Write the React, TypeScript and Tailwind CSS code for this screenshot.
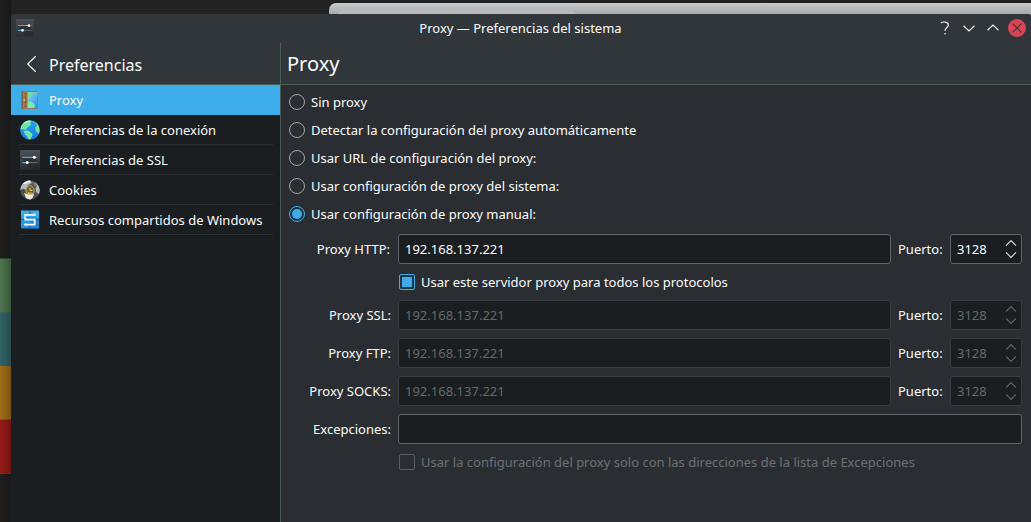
import React from "react";

function SettingsIcon({ className }: { className: string }) {
  return (
    <svg viewBox="0 0 20 20" className={className}>
      <defs>
        <linearGradient id="sg" x1="0" y1="0" x2="0" y2="1">
          <stop offset="0" stopColor="#4c4f55" />
          <stop offset="1" stopColor="#2c2e33" />
        </linearGradient>
      </defs>
      <rect x="0" y="0" width="20" height="19.5" fill="url(#sg)" />
      <path d="M2 8.5 L14 7.5 L19.5 13 V19 H11 L5 13Z" fill="#222429" opacity="0.55" />
      <path d="M14 7.3H18" stroke="#73767b" strokeWidth="1" />
      <path d="M8 12.6H18" stroke="#686b70" strokeWidth="1" />
      <path d="M2.4 7.3H14M2.4 12.6H7" stroke="#3daee9" strokeWidth="1.2" />
      <circle cx="14.3" cy="7.3" r="1.5" fill="#fff" />
      <circle cx="7.2" cy="12.6" r="1.5" fill="#fff" />
    </svg>
  );
}

function ProxyIcon() {
  return (
    <svg viewBox="0 0 20 20" className="h-5 w-5">
      <defs>
        <linearGradient id="pg" x1="0" y1="0" x2="1" y2="1">
          <stop offset="0" stopColor="#8fd3fa" />
          <stop offset="1" stopColor="#2f94ea" />
        </linearGradient>
      </defs>
      <rect x="3" y="1" width="15" height="18" fill="#8c7b6b" />
      <rect x="7" y="2" width="10.3" height="16" fill="url(#pg)" />
      <path d="M7 2H13Q13 5 10.5 6.5L8.6 10.4L7 10Z" fill="#75dfa3" />
      <path d="M7 12L11 11.5L13 13L15.2 16L13.5 18H7Z" fill="#7cebab" />
      <path d="M13 2H17.3V6Z" fill="#8abd9b" />
      <path d="M1.6 0.8L7.6 1.8V17.9L1.6 19.3Z" fill="#aa7950" />
      <path d="M1.6 0.8L3 1V19L1.6 19.3Z" fill="#856042" />
      <path d="M5.6 3.2V17M4 3.2H6.8M4 7.2H6.8M4 12.5H6.8M4 16.5H6.8" stroke="#79573e" strokeWidth="0.7" />
      <circle cx="4.2" cy="10" r="0.8" fill="#ead3a2" />
    </svg>
  );
}

function GlobeIcon() {
  return (
    <svg viewBox="0 0 20 20" className="h-5 w-5">
      <defs>
        <linearGradient id="gg" x1="0" y1="0" x2="0" y2="1">
          <stop offset="0" stopColor="#23a6f4" />
          <stop offset="1" stopColor="#1b78e5" />
        </linearGradient>
        <clipPath id="gc"><circle cx="10" cy="10" r="9.8" /></clipPath>
      </defs>
      <circle cx="10" cy="10" r="9.8" fill="url(#gg)" />
      <g clipPath="url(#gc)" fill="#76e4a1">
        <path d="M1 6L5 1L10 0L11.5 1.7L10 4L11.2 5L8.8 6.4L6.8 8L5.8 10.2L3.8 9.2L2.3 9.7L0 9Z" />
        <path d="M3.5 11.2L7.3 10.2L9.6 11.5L12 13.5L12.7 15L10.7 18.7L9 20L7.3 17L5 14.2Z" />
        <path d="M14.5 2L18 4.5L19.7 8.5V14L17.5 12.8L15.8 10.7L15.2 8L17 5.5Z" />
        <path d="M2.6 3.5L8.5 0L10.8 1.2L6.8 3.3Z" fill="#a4efc2" />
      </g>
    </svg>
  );
}

function CookieIcon() {
  return (
    <svg viewBox="0 0 20 20" className="h-5 w-5">
      <clipPath id="cc"><circle cx="10" cy="10" r="9.8" /></clipPath>
      <circle cx="10" cy="10" r="9.8" fill="#4d4f51" />
      <g clipPath="url(#cc)">
        <path d="M0 8L4 1L10 0L12 3L8 5L5.6 10L3.8 8.7L0 10Z" fill="#b7b9bb" />
        <path d="M2 4L9 0L11 2L5 4Z" fill="#f3f3f3" />
        <path d="M4 13L7 14L10 12L14 14L12.5 18L10 20L6 18Z" fill="#e9e9e9" />
        <path d="M15 2L18 5L20 9V15L16 12L15.5 8L17 6Z" fill="#b8babb" />
        <path d="M12 2L16 3L17 7L14 6Z" fill="#7c7e7f" />
      </g>
      <path d="M9.5 5.3C7.8 6 6 8 6 10.4A4.1 4.1 0 0 0 14.2 10.4C14.2 8 12.5 6.5 10.2 5.2Z" fill="#777260" fillOpacity="0.6" stroke="#d5b631" strokeWidth="0.9" />
      <path d="M10 8V10.5H12.3M7.8 12L9 12.8" fill="none" stroke="#f0cc35" strokeWidth="1" />
    </svg>
  );
}

function SambaIcon() {
  return (
    <svg viewBox="0 0 20 20" className="h-5 w-5">
      <defs>
        <linearGradient id="wg" x1="0" y1="0" x2="0" y2="1">
          <stop offset="0" stopColor="#3eb2ee" />
          <stop offset="1" stopColor="#1e8be2" />
        </linearGradient>
      </defs>
      <rect x="1" y="0.5" width="18" height="18" fill="url(#wg)" />
      <path d="M10 0.5V5M10 15V18.5M1 9.7H5M15 9.7H19" stroke="#1c4f78" strokeWidth="0.9" />
      <path d="M5.5 7L15.5 17H19V10L15.5 6.5Z" fill="#1b71ad" opacity="0.4" />
      <path d="M14.5 4.8H5.2V9.7H14.7V14.6H5" fill="none" stroke="#f4f8fb" strokeWidth="1.7" />
      <path d="M14 3L16.4 4.8L14 6.6ZM6 12.8L3.6 14.6L6 16.4Z" fill="#f4f8fb" />
    </svg>
  );
}

const items = [
  { label: "Proxy", icon: <ProxyIcon /> },
  { label: "Preferencias de la conexión", icon: <GlobeIcon /> },
  { label: "Preferencias de SSL", icon: <SettingsIcon className="h-5 w-5" /> },
  { label: "Cookies", icon: <CookieIcon /> },
  { label: "Recursos compartidos de Windows", icon: <SambaIcon /> },
];

const modes = [
  "Sin proxy",
  "Detectar la configuración del proxy automáticamente",
  "Usar URL de configuración del proxy:",
  "Usar configuración de proxy del sistema:",
  "Usar configuración de proxy manual:",
];

function Radio({ label, checked }: { label: string; checked: boolean }) {
  return (
    <div className="flex h-5 items-center gap-1.5">
      <svg viewBox="0 0 16 16" className="h-4 w-4">
        <circle cx="8" cy="8" r="7.5" fill={checked ? "#1f3442" : "none"} stroke={checked ? "#3daee9" : "#a0a3a5"} />
        {checked && <circle cx="8" cy="8" r="5" fill="#3daee9" />}
      </svg>
      <span>{label}</span>
    </div>
  );
}

function ProxyRow({ label, enabled }: { label: string; enabled: boolean }) {
  const box = enabled ? "border-[#616569] text-[#fcfcfc]" : "border-[#383c40] text-[#65686a]";
  return (
    <div className="flex h-[30px] items-center">
      <div className={`w-[111px] text-right ${enabled ? "pr-2" : "pr-[7px]"}`}>{label}</div>
      <div className={`flex h-[30px] w-[493px] items-center rounded-[3px] border bg-[#1b1e20] pl-1.5 ${box}`}>192.168.137.221</div>
      <div className="w-[59px] pl-[7px]">Puerto:</div>
      <div className={`flex h-[30px] w-[72px] items-center justify-between rounded-[3px] border bg-[#1b1e20] pr-1 pl-1.5 ${box}`}>
        <span>3128</span>
        <svg viewBox="0 0 12 20" className="h-5 w-3" fill="none" stroke={enabled ? "#dcdddd" : "#626567"} strokeWidth="1.1">
          <path d="M1 6.6L6 1.6L11 6.6M1 13.4L6 18.4L11 13.4" />
        </svg>
      </div>
    </div>
  );
}

export default function App() {
  return (
    <div className="relative flex h-[522px] w-[1031px] overflow-hidden bg-[#222222] font-['Noto_Sans',sans-serif] text-[13px] leading-5 whitespace-nowrap text-[#fcfcfc]">
      <div className="absolute top-[3px] left-[329px] h-8 w-[702px] overflow-hidden rounded-tl-[7px] bg-linear-to-b from-[#c8cacc] from-0% to-[#a2a4a7] to-40%">
        <div className="mt-[7px] ml-2 h-6 w-[240px] rounded-t-[8px] bg-[#bababa]" />
      </div>

      <div className="relative w-[11px] shrink-0 bg-[#202020] pt-[258px]">
        <div className="h-[54px] border-t border-[#354d36] bg-[#4d754e]" />
        <div className="h-[54px] border-t border-[#3c685c] bg-[#326468]" />
        <div className="h-[53px] bg-[#a07018]" />
        <div className="h-[55px] border-t border-b border-t-[#90551a] border-b-[#614028] bg-[#981b16]" />
        <div className="absolute inset-0 bg-linear-to-r from-transparent to-black/25" />
      </div>

      <div className="relative mt-3.5 flex h-[508px] w-[1020px] flex-col overflow-hidden rounded-t-[3px] bg-[#2a2e32]">
        <header className="flex h-[29px] shrink-0 items-center bg-[#31363b] pb-px">
          <div className="w-[300px] pl-[5px]">
            <SettingsIcon className="h-[18px] w-[18px]" />
          </div>
          <div className="w-[419px] text-center">Proxy — Preferencias del sistema</div>
          <div className="flex flex-1 items-center justify-end pr-1">
            <svg viewBox="0 0 92 20" className="h-5 w-[92px]" fill="none" stroke="#eeeeee" strokeWidth="1.2">
              <path d="M5.8 5C7.4 3.6 13.4 3.3 13.4 6.9C13.4 9.6 10 9.6 10 13" />
              <rect x="9.4" y="15" width="1.3" height="1.5" fill="#eeeeee" stroke="none" />
              <path d="M28.5 7.7L34 12.9L39.5 7.7M52.5 12.3L58 7.1L63.5 12.3" />
              <circle cx="82" cy="10" r="9" fill="#da4453" stroke="none" />
              <path d="M77.7 5.7L86.3 14.3M86.3 5.7L77.7 14.3" stroke="#31363b" />
            </svg>
          </div>
        </header>

        <div className="flex min-h-0 flex-1">
          <aside className="w-[269px] shrink-0 bg-[#1b1e20]">
            <div className="flex h-[42px] items-center gap-[11px] border-b border-[#4b5c59] bg-[#31363b] pt-[3px] pl-[14px] text-[16px]">
              <svg viewBox="0 0 13 18" className="-mt-0.5 h-[18px] w-[13px]" fill="none" stroke="#fcfcfc" strokeWidth="1.2">
                <path d="M10.7 1.2L2.8 9L10.7 16.8" />
              </svg>
              <span>Preferencias</span>
            </div>
            <nav>
              {items.map((item, i) => (
                <div key={item.label} className={`h-[30px] ${i === 0 ? "bg-[#3daee9]" : ""}`}>
                  <div className={`mr-[7px] ml-2 flex h-[30px] items-center gap-[9px] pl-px ${i === 0 ? "" : "border-b border-[#2b2f32] pt-px"}`}>
                    {item.icon}
                    <span>{item.label}</span>
                  </div>
                </div>
              ))}
            </nav>
          </aside>

          <main className="flex-1 border-l border-[#4b5c59]">
            <div className="flex h-[42px] items-center border-b border-[#4b5c59] bg-[#31363b] pl-1.5 text-[20px]">Proxy</div>
            <div className="flex flex-col gap-2 pt-[7px] pl-2">
              {modes.map((mode, i) => (
                <Radio key={mode} label={mode} checked={i === 4} />
              ))}
            </div>
            <div className="mt-2.5 flex flex-col gap-2 pl-1.5">
              <ProxyRow label="Proxy HTTP:" enabled />
              <div className="flex h-5 items-center gap-1.5 pl-28">
                <div className="flex h-4 w-4 items-center justify-center rounded-[2px] border border-[#3daee9] bg-[#1f3442]">
                  <div className="h-2.5 w-2.5 bg-[#3daee9]" />
                </div>
                <span>Usar este servidor proxy para todos los protocolos</span>
              </div>
              <ProxyRow label="Proxy SSL:" enabled={false} />
              <ProxyRow label="Proxy FTP:" enabled={false} />
              <ProxyRow label="Proxy SOCKS:" enabled={false} />
              <div className="flex h-[30px] items-center">
                <div className="w-[111px] pr-[7px] text-right">Excepciones:</div>
                <div className="h-[30px] w-[624px] rounded-[3px] border border-[#616569] bg-[#1b1e20]" />
              </div>
              <div className="flex h-5 items-center gap-1.5 pl-28 text-[#6c6f72]">
                <div className="h-4 w-4 rounded-[2px] border border-[#5b5f62]" />
                <span>Usar la configuración del proxy solo con las direcciones de la lista de Excepciones</span>
              </div>
            </div>
          </main>
        </div>
      </div>
    </div>
  );
}
